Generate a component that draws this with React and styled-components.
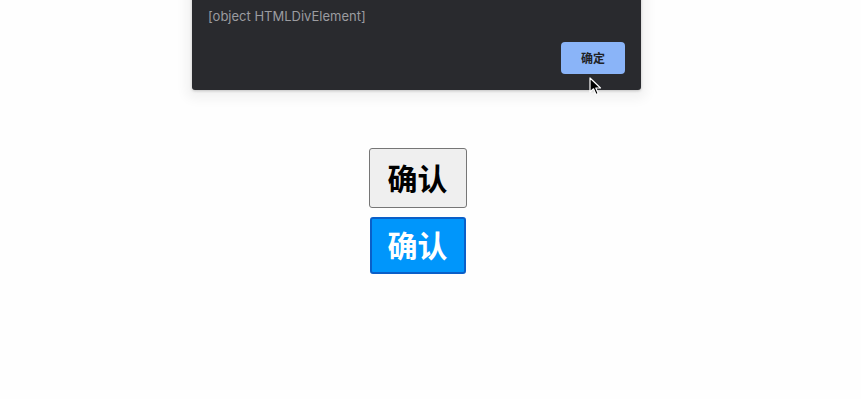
import React from 'react';
import styled, { createGlobalStyle } from 'styled-components';

const Global = createGlobalStyle`
	html, body {
		margin: 0;
		padding: 0;
		background: #fefefe;
	}
	body {
		font-family: "Noto Sans CJK SC", "Liberation Sans", sans-serif;
		overflow: hidden;
	}
`;

const Page = styled.div`
	position: relative;
	width: 861px;
	height: 399px;
`;

const Dialog = styled.div`
	position: absolute;
	left: 192px;
	top: -50px;
	width: 449px;
	height: 140px;
	box-sizing: border-box;
	background: #292a2e;
	border-radius: 0 0 3px 3px;
	box-shadow: 0 1px 3px rgba(0, 0, 0, 0.2), 0 3px 12px 6px rgba(0, 0, 0, 0.05);
	padding: 57px 16px 0 16px;
	display: flex;
	flex-direction: column;
`;

const Message = styled.div`
	font-family: "Inter", "Liberation Sans", sans-serif;
	font-size: 13px;
	color: #9b9ca0;
	line-height: 18px;
`;

const Footer = styled.div`
	display: flex;
	justify-content: flex-end;
	margin-top: 17px;
`;

const OkButton = styled.button`
	width: 64px;
	height: 32px;
	border: none;
	border-radius: 4px;
	background: #8ab4f8;
	color: #202124;
	font-family: "Noto Sans CJK SC", sans-serif;
	font-weight: 700;
	font-size: 12px;
	padding: 0 0 2px 0;
`;

const Cursor = styled.svg`
	position: absolute;
	left: 589px;
	top: 77px;
`;

const Stack = styled.div`
	display: flex;
	flex-direction: column;
	align-items: center;
	gap: 9px;
	padding-top: 148px;
	padding-right: 26px;
`;

const Btn = styled.button`
	box-sizing: border-box;
	width: ${p => (p.$primary ? '96px' : '98px')};
	height: ${p => (p.$primary ? '57px' : '60px')};
	padding: 0 0 3px 0;
	font-family: "Noto Sans CJK SC", sans-serif;
	font-weight: 700;
	font-size: 30px;
	line-height: 1;
	border-radius: 3px;
	border: ${p => (p.$primary ? '2px solid #0a5fc8' : '1px solid #767676')};
	background: ${p => (p.$primary ? '#0096fb' : '#efefef')};
	color: ${p => (p.$primary ? '#ffffff' : '#000000')};
`;

export default function App() {
	return (
		<Page>
			<Global />
			<Dialog>
				<Message>[object HTMLDivElement]</Message>
				<Footer>
					<OkButton>确定</OkButton>
				</Footer>
			</Dialog>
			<Cursor width="14" height="20" viewBox="0 0 14 20">
				<path d="M1 1 L1 15 L4.5 11.8 L7 17.5 L9.2 16.5 L6.8 11 L11.5 11 Z" fill="#000" stroke="#fff" strokeWidth="1.2" strokeLinejoin="round" />
			</Cursor>
			<Stack>
				<Btn>确认</Btn>
				<Btn $primary>确认</Btn>
			</Stack>
		</Page>
	);
}
